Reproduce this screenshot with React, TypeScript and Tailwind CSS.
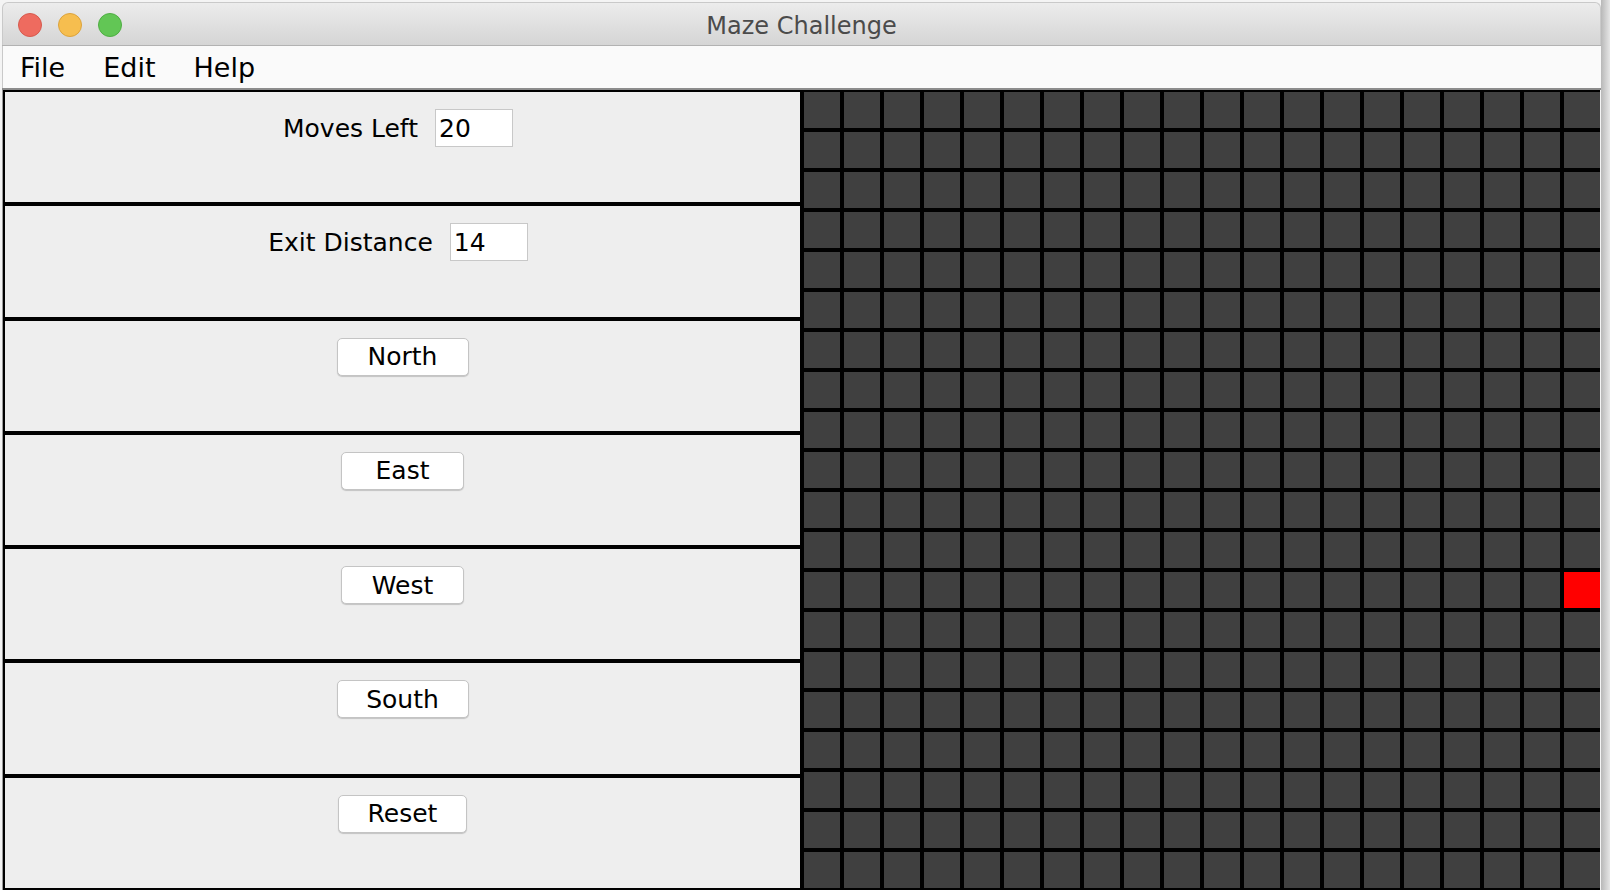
import React from 'react';

const ROWS = 20;
const COLS = 20;
const PLAYER = { row: 12, col: 19 };

const font = { fontFamily: '"DejaVu Sans", "Liberation Sans", sans-serif' };

const TrafficLights: React.FC = () => (
  <div className="flex items-center gap-[16px] pl-[15px] pt-[2px]">
    <span className="w-[24px] h-[24px] rounded-full bg-[#ee6b5f] border border-[#d65a4e]" />
    <span className="w-[24px] h-[24px] rounded-full bg-[#f6be4f] border border-[#dca33c]" />
    <span className="w-[24px] h-[24px] rounded-full bg-[#62c655] border border-[#4fae43]" />
  </div>
);

const Field: React.FC<{ label: string; value: string }> = ({ label, value }) => (
  <div className="flex items-center gap-[17px] pr-[9px]">
    <span className="text-[25px] text-black leading-none">{label}</span>
    <div className="w-[78px] h-[38px] bg-white border border-[#c8c8c8] flex items-center pl-[3px] text-[25px] text-black leading-none">
      {value}
    </div>
  </div>
);

const MoveButton: React.FC<{ label: string; width: string }> = ({ label, width }) => (
  <button
    className={`${width} h-[38px] bg-white rounded-[5px] border border-[#c4c4c4] shadow-[0_1px_1px_rgba(0,0,0,0.18)] text-[25px] text-black leading-none flex items-center justify-center`}
  >
    {label}
  </button>
);

const Panel: React.FC<{ children: React.ReactNode }> = ({ children }) => (
  <div className="border-2 border-black bg-[#eeeeee] flex justify-center items-start pt-[17px] min-h-0">
    {children}
  </div>
);

const MazeGrid: React.FC = () => {
  const cells = [];
  for (let r = 0; r < ROWS; r++) {
    for (let c = 0; c < COLS; c++) {
      const isPlayer = r === PLAYER.row && c === PLAYER.col;
      cells.push(
        <div
          key={`${r}-${c}`}
          className={`w-[40px] h-[40px] border-2 border-black ${isPlayer ? 'bg-[#ff0000]' : 'bg-[#404040]'}`}
        />
      );
    }
  }
  return (
    <div className="w-[798px] h-[800px] overflow-hidden bg-black">
      <div className="grid grid-cols-[repeat(20,40px)] w-[800px]">{cells}</div>
    </div>
  );
};

export default function App() {
  return (
    <div className="w-[1610px] h-[890px] bg-[#f4f4f4] overflow-hidden" style={font}>
      <div className="flex">
        <div className="ml-[2px] mt-[2px] w-[1599px] flex flex-col">
          {/* title bar */}
          <div className="h-[43px] rounded-t-[6px] bg-gradient-to-b from-[#ececec] to-[#d5d5d5] border border-b-0 border-[#c9c9c9] relative flex items-center">
            <TrafficLights />
            <div className="absolute inset-0 flex items-center justify-center pt-[3px] text-[24px] text-[#4b4b4b]">
              Maze Challenge
            </div>
          </div>
          <div className="h-px bg-[#b2b2b2]" />
          {/* menu bar */}
          <div className="h-[42px] bg-[#fafafa] flex items-center gap-[38px] pl-[17px] pt-[3px] text-[27px] text-black border-l border-[#c9c9c9]">
            <span>File</span>
            <span>Edit</span>
            <span>Help</span>
          </div>
          <div className="h-[2px] bg-[#8c8c8c]" />
          {/* content */}
          <div className="flex h-[800px] border-l border-[#9a9a9a]">
            <div className="w-[799px] grid grid-rows-7">
              <Panel>
                <Field label="Moves Left" value="20" />
              </Panel>
              <Panel>
                <Field label="Exit Distance" value="14" />
              </Panel>
              <Panel>
                <MoveButton label="North" width="w-[132px]" />
              </Panel>
              <Panel>
                <MoveButton label="East" width="w-[123px]" />
              </Panel>
              <Panel>
                <MoveButton label="West" width="w-[123px]" />
              </Panel>
              <Panel>
                <MoveButton label="South" width="w-[132px]" />
              </Panel>
              <Panel>
                <MoveButton label="Reset" width="w-[129px]" />
              </Panel>
            </div>
            <MazeGrid />
          </div>
        </div>
        <div className="w-[9px] h-[890px] bg-gradient-to-r from-[#b8b8b8] to-[#e6e6e6]" />
      </div>
    </div>
  );
}
